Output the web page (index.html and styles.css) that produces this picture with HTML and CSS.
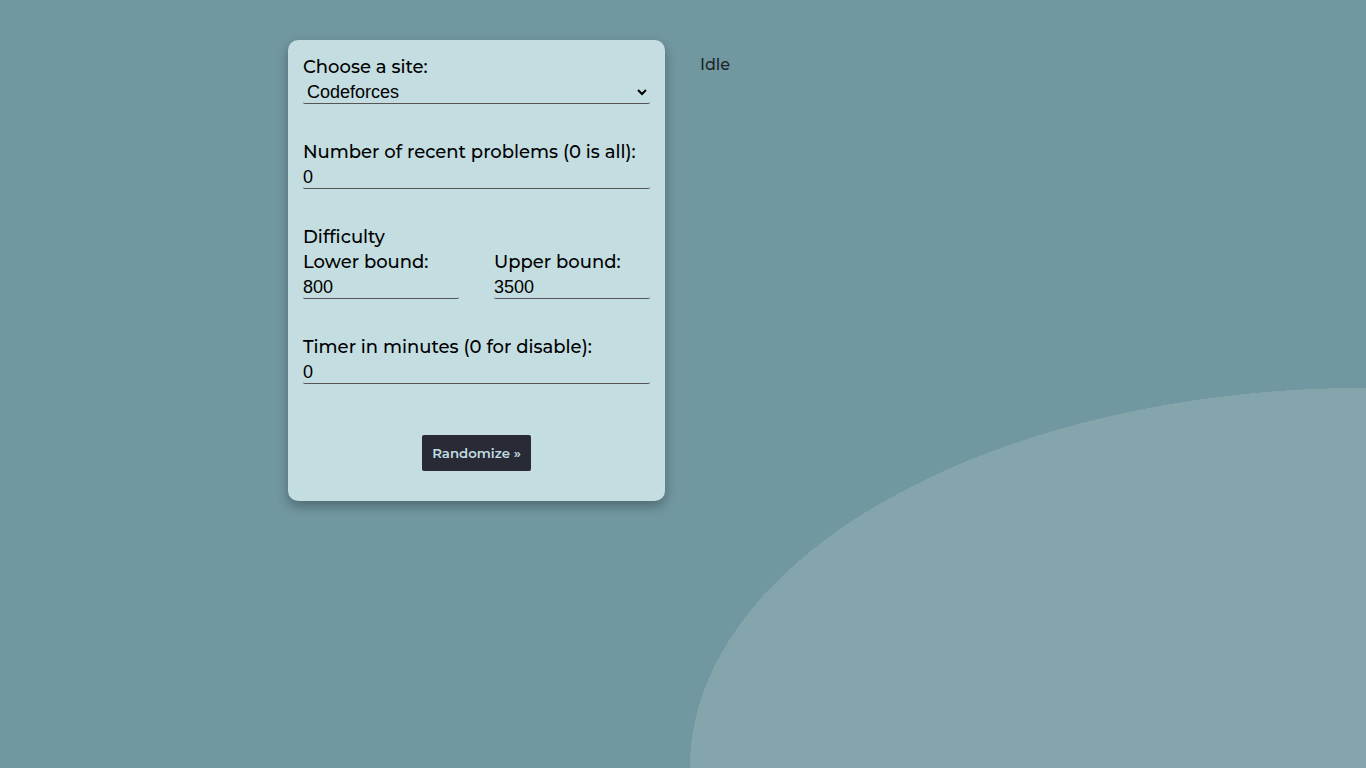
FILE: index.html
```html
<!DOCTYPE html>
<html lang="en">
<head>
<meta charset="utf-8">
<title>Problem Randomizer</title>
<link rel="stylesheet" href="styles.css">
</head>
<body>
<main class="layout">
  <form class="card">
    <div class="field">
      <label for="site">Choose a site:</label>
      <select id="site" class="control select"><option>Codeforces</option></select>
    </div>
    <div class="field">
      <label for="recent">Number of recent problems (0 is all):</label>
      <input id="recent" class="control" type="text" inputmode="numeric" value="0">
    </div>
    <fieldset class="field group">
      <legend>Difficulty</legend>
      <div class="bounds">
        <div class="bound">
          <label for="lower">Lower bound:</label>
          <input id="lower" class="control" type="text" inputmode="numeric" value="800">
        </div>
        <div class="bound">
          <label for="upper">Upper bound:</label>
          <input id="upper" class="control" type="text" inputmode="numeric" value="3500">
        </div>
      </div>
    </fieldset>
    <div class="field">
      <label for="timer">Timer in minutes (0 for disable):</label>
      <input id="timer" class="control" type="text" inputmode="numeric" value="0">
    </div>
    <button class="submit" type="button">Randomize »</button>
  </form>
  <section class="status">Idle</section>
</main>
</body>
</html>
```
FILE: styles.css
```css
* {
  box-sizing: border-box;
}

body {
  margin: 0;
  min-height: 100vh;
  background: radial-gradient(farthest-corner at 100% 100%, #85a5ac 35%, #7197a0 35%);
  color: #000;
  font: 500 18px/25px Montserrat, Inter, sans-serif;
  font-variant-ligatures: none;
}

.layout {
  display: grid;
  grid-template-columns: 377px 1fr;
  gap: 35px;
  max-width: 790px;
  margin: 0 auto;
  padding-top: 40px;
  align-items: start;
}

.card {
  display: flex;
  flex-direction: column;
  padding: 15px 15px 30px;
  border-radius: 10px;
  background: #c3dde0;
  box-shadow: 0 5px 12px rgba(0, 0, 0, 0.3);
}

.field label,
.group legend {
  display: block;
  padding: 0;
}

.group {
  min-width: 0;
  padding: 0;
  border: 0;
}

.field {
  margin: 0 0 36px;
}

.bounds {
  display: grid;
  grid-template-columns: 1fr 1fr;
  gap: 35px;
}

.control {
  display: block;
  width: 100%;
  height: 24px;
  padding: 1px 0 0;
  border: 0;
  border-bottom: 1px solid #555;
  border-radius: 2px;
  background: transparent;
  color: #000;
  font: 18px "Liberation Sans", sans-serif;
}

.submit {
  align-self: center;
  height: 36px;
  margin-top: 15px;
  padding: 0 10px;
  border: 0;
  border-radius: 2px;
  background: #282a36;
  color: #c3dde0;
  font-family: Montserrat, Inter, sans-serif;
  font-weight: 600;
}

.status {
  padding-top: 12px;
  color: #1c2628;
  font-size: 16px;
}
```
